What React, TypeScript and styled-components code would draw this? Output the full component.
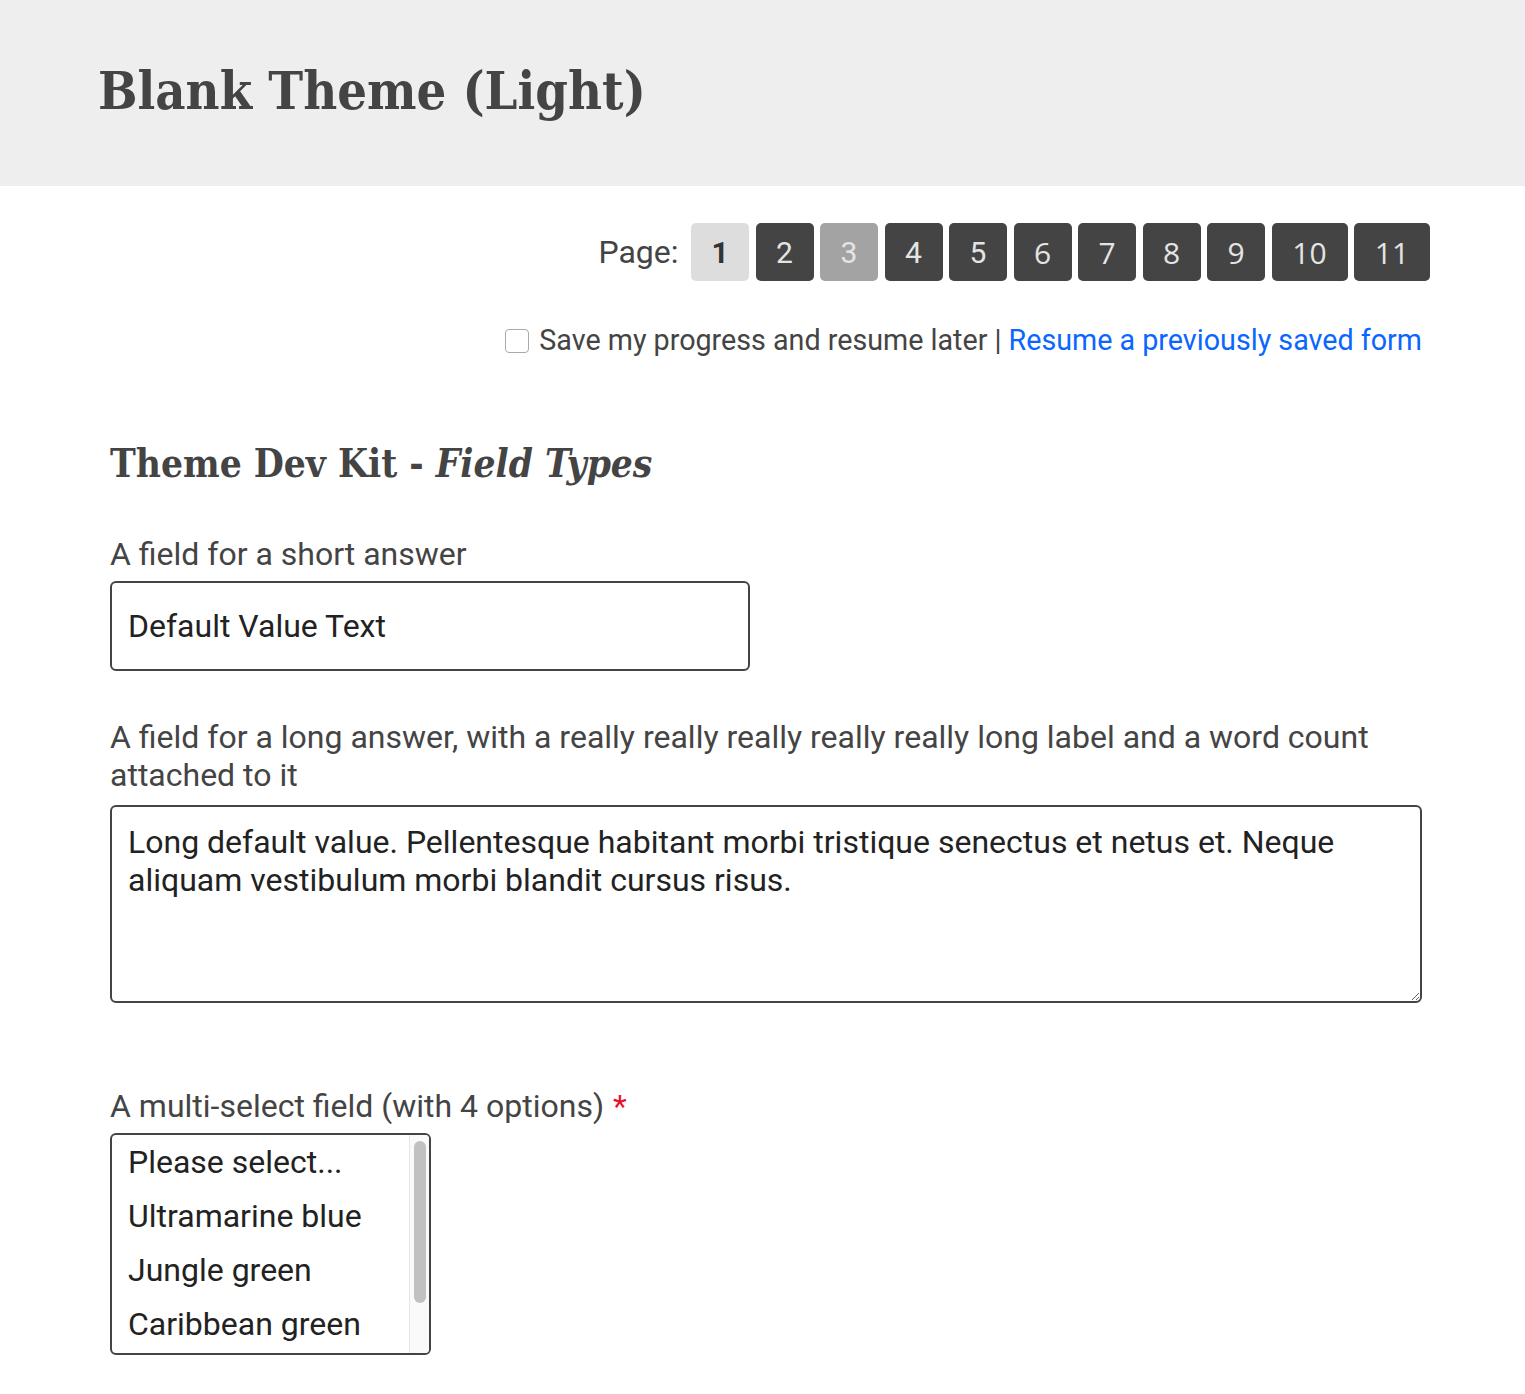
import React from 'react';
import styled, { createGlobalStyle } from 'styled-components';

const GlobalStyle = createGlobalStyle`
  body {
    margin: 0;
    background: #fff;
    font-family: Roboto, "Liberation Sans", sans-serif;
    color: #444;
  }
`;

const slab = `"DejaVu Serif Condensed", "DejaVu Serif", serif`;

const Header = styled.header`
  background: #eeeeee;
  height: 186px;
  display: flex;
  align-items: center;
  padding: 0 98px;
  box-sizing: border-box;
`;

const Title = styled.h1`
  margin: 0 0 6px;
  font-family: ${slab};
  font-weight: 700;
  font-size: 52px;
  color: #444;
`;

const Main = styled.main`
  width: 1312px;
  margin: 0 0 0 110px;
  padding-top: 37px;
`;

const Pager = styled.nav`
  display: flex;
  justify-content: flex-end;
  align-items: center;
  gap: 6.5px;
  margin-right: -8px;
`;

const PagerLabel = styled.span`
  font-size: 32px;
  margin-right: 6px;
`;

const PageButton = styled.button<{ $state: 'current' | 'visited' | 'normal'; $wide?: boolean; $alt?: boolean }>`
  height: 58px;
  min-width: ${(p) => (p.$wide ? '76px' : '58px')};
  border: none;
  border-radius: 5px;
  font-size: 30px;
  font-family: ${(p) => (p.$alt ? '"Open Sans", Roboto, sans-serif' : 'Roboto, sans-serif')};
  font-weight: ${(p) => (p.$state === 'current' ? 700 : 400)};
  background: ${(p) => (p.$state === 'current' ? '#dddddd' : p.$state === 'visited' ? '#a3a3a3' : '#444444')};
  color: ${(p) => (p.$state === 'current' ? '#333' : '#e4e4e4')};
  padding: 0;
`;

const SaveRow = styled.div`
  display: flex;
  justify-content: flex-end;
  align-items: center;
  margin-top: 42px;
  font-size: 28.7px;
  color: #444;
`;

const Check = styled.input`
  width: 24px;
  height: 24px;
  margin: 2px 10px 0 0;
  border: 1px solid #aaa;
  border-radius: 4px;
  appearance: none;
  background: #fff;
`;

const Link = styled.a`
  color: #0a66ff;
  text-decoration: none;
  margin-left: 7px;
`;

const FormTitle = styled.h2`
  margin: 84px 0 0;
  font-family: ${slab};
  font-weight: 700;
  font-size: 38.5px;
  color: #444;

  em {
    font-style: italic;
  }
`;

const Field = styled.div<{ $gap?: number }>`
  margin-top: ${(p) => p.$gap ?? 46}px;
  display: flex;
  flex-direction: column;
`;

const Label = styled.label`
  font-size: 32px;
  line-height: 38px;
  color: #444;
  margin-bottom: 8px;
`;

const Required = styled.span`
  color: #e8112d;
  margin-left: 9px;
`;

const TextInput = styled.input`
  width: 640px;
  height: 90px;
  box-sizing: border-box;
  border: 2px solid #444;
  border-radius: 6px;
  padding: 0 16px;
  font-family: Roboto, sans-serif;
  font-size: 32px;
  color: #222;
  outline: none;
`;

const TextArea = styled.textarea`
  width: 1312px;
  height: 198px;
  margin-top: 3px;
  box-sizing: border-box;
  border: 2px solid #444;
  border-radius: 6px;
  padding: 16px 16px;
  font-family: Roboto, sans-serif;
  font-size: 32px;
  line-height: 38px;
  color: #222;
  outline: none;
`;

const ListBox = styled.div`
  width: 321px;
  height: 222px;
  box-sizing: border-box;
  border: 2px solid #444;
  border-radius: 6px;
  display: flex;
  overflow: hidden;
  background: #fff;
`;

const Options = styled.div`
  flex: 1;
  display: flex;
  flex-direction: column;
`;

const Option = styled.div`
  height: 54px;
  flex-shrink: 0;
  display: flex;
  align-items: center;
  padding: 0 16px;
  font-size: 32px;
  color: #222;
  white-space: nowrap;
`;

const ScrollTrack = styled.div`
  width: 20px;
  box-sizing: border-box;
  background: #fafafa;
  border-left: 1px solid #e6e6e6;
  padding: 6px 3px 0 4px;
`;

const Thumb = styled.div`
  height: 162px;
  border-radius: 6px;
  background: #c1c1c1;
`;

const pages = [1, 2, 3, 4, 5, 6, 7, 8, 9, 10, 11];
const colours = ['Please select...', 'Ultramarine blue', 'Jungle green', 'Caribbean green'];

export default function App() {
  return (
    <>
      <GlobalStyle />
      <Header>
        <Title>Blank Theme (Light)</Title>
      </Header>
      <Main>
        <Pager>
          <PagerLabel>Page:</PagerLabel>
          {pages.map((n) => (
            <PageButton
              key={n}
              $state={n === 1 ? 'current' : n === 3 ? 'visited' : 'normal'}
              $wide={n >= 10}
              $alt={n >= 6}
            >
              {n}
            </PageButton>
          ))}
        </Pager>
        <SaveRow>
          <Check type="checkbox" />
          <span>Save my progress and resume later |</span>
          <Link href="#">Resume a previously saved form</Link>
        </SaveRow>

        <FormTitle>
          Theme Dev Kit - <em>Field Types</em>
        </FormTitle>

        <Field $gap={49}>
          <Label>A field for a short answer</Label>
          <TextInput defaultValue="Default Value Text" />
        </Field>

        <Field $gap={47}>
          <Label>
            A field for a long answer, with a really really really really really long label and a word count attached to
            it
          </Label>
          <TextArea defaultValue="Long default value. Pellentesque habitant morbi tristique senectus et netus et. Neque aliquam vestibulum morbi blandit cursus risus." />
        </Field>

        <Field $gap={84}>
          <Label>
            A multi-select field (with 4 options)<Required>*</Required>
          </Label>
          <ListBox role="listbox" aria-multiselectable="true">
            <Options>
              {colours.map((c) => (
                <Option key={c} role="option">
                  {c}
                </Option>
              ))}
            </Options>
            <ScrollTrack>
              <Thumb />
            </ScrollTrack>
          </ListBox>
        </Field>
      </Main>
    </>
  );
}
